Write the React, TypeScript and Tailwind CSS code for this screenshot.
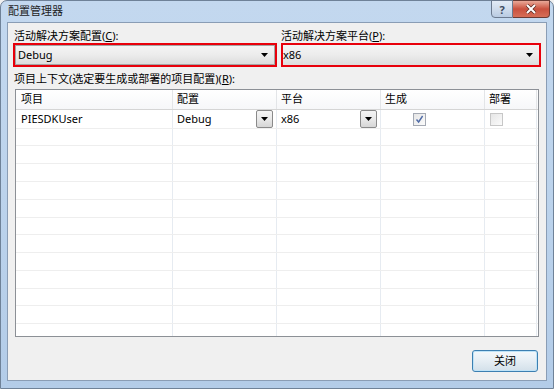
import React from "react";

function Arrow() {
  return (
    <svg width="7" height="4" viewBox="0 0 7 4" className="block">
      <path d="M0 0 H7 L3.5 4 Z" fill="#000" />
    </svg>
  );
}

function CellButton() {
  return (
    <div className="w-[17px] h-[18px] border border-[#8a8a8a] rounded-[2px] bg-gradient-to-b from-[#f5f5f5] via-[#e9e9e9] to-[#d6d6d6] flex items-center justify-center">
      <Arrow />
    </div>
  );
}

function CheckBox({ checked }: { checked: boolean }) {
  return (
    <div
      className={
        "w-[13px] h-[13px] border flex items-center justify-center bg-gradient-to-br from-[#e6e6e6] to-[#fbfbfb] " +
        (checked ? "border-[#a4a9b3]" : "border-[#c7c7c7]")
      }
    >
      {checked && (
        <svg width="9" height="9" viewBox="0 0 9 9" className="block">
          <path d="M1.5 4.5 L3.6 7 L7.6 1" stroke="#4f6ba6" strokeWidth="1.4" fill="none" />
        </svg>
      )}
    </div>
  );
}

const rowHeights = [17, 18, 18, 18, 18, 17, 18, 18, 18, 17, 18, 18];

export default function App() {
  return (
    <div className="w-[554px] h-[389px] overflow-hidden bg-[#f0f0f0]">
      <div className="w-[554px] h-[389px] flex flex-col border border-[#6f8298] rounded-t-[7px] bg-gradient-to-b from-[#c3d8ef] via-[#bcd3ec] to-[#b3cce8] font-['Noto_Sans','Noto_Sans_CJK_SC',sans-serif] text-[11px] text-black">
        {/* title bar */}
        <div className="h-[21px] flex items-start shrink-0">
          <div className="pl-[7px] pt-[2px] leading-[16px] text-[11px] text-[#1e1e1e]">配置管理器</div>
          <div className="ml-auto mr-[3px] flex h-[18px] -mt-[1px]">
            <div className="w-[22px] h-full border border-[#6b7a8f] rounded-bl-[4px] bg-gradient-to-b from-[#e2ebf6] via-[#cfdcec] to-[#b9cbe2] flex items-center justify-center text-[11px] leading-none text-[#3d4b5e] font-bold">
              ?
            </div>
            <div className="w-[37px] h-full border border-l-0 border-[#6b3a33] rounded-br-[4px] bg-gradient-to-b from-[#e9a898] via-[#c9503e] to-[#d66e57] flex items-center justify-center">
              <svg width="12" height="10" viewBox="0 0 12 10" className="block">
                <path d="M2 1 L10 9 M10 1 L2 9" stroke="#5a2a22" strokeWidth="3.4" />
                <path d="M2 1 L10 9 M10 1 L2 9" stroke="#ffffff" strokeWidth="2" />
              </svg>
            </div>
          </div>
        </div>

        {/* client area */}
        <div className="ml-[6px] w-[540px] h-[359px] border border-[#8a9db5] bg-[#f0f0f0] flex flex-col px-[5px] pt-[6px]">
          <div className="flex gap-[4px]">
            <div className="w-[264px] flex flex-col">
              <div className="h-[14px] leading-[14px] pl-[1px]">
                活动解决方案配置(<span className="underline">C</span>):
              </div>
              <div className="h-[24px] border-2 border-[#e8000b]">
                <div className="h-full border border-[#a5a5a5] bg-gradient-to-b from-[#f4f4f4] via-[#ececec] to-[#dddddd] flex items-center pl-[2px] pr-[6px]">
                  <span className="leading-[14px]">Debug</span>
                  <span className="ml-auto">
                    <Arrow />
                  </span>
                </div>
              </div>
            </div>
            <div className="flex-1 flex flex-col">
              <div className="h-[14px] leading-[14px]">
                活动解决方案平台(<span className="underline">P</span>):
              </div>
              <div className="h-[24px] border-2 border-[#e8000b] bg-gradient-to-b from-[#f4f4f4] via-[#ececec] to-[#dddddd] flex items-center pr-[6px]">
                <span className="leading-[14px]">x86</span>
                <span className="ml-auto">
                  <Arrow />
                </span>
              </div>
            </div>
          </div>

          <div className="mt-[5px] h-[14px] leading-[14px] pl-[1px]">
            项目上下文(选定要生成或部署的项目配置)(<span className="underline">R</span>):
          </div>

          {/* grid */}
          <div className="mt-[3px] ml-[2px] w-[524px] h-[248px] border border-[#8c9096] bg-white overflow-hidden flex flex-col">
            <div className="h-[20px] shrink-0 flex border-b border-[#d5d5d5] bg-gradient-to-b from-[#ffffff] to-[#f6f7f9]">
              <div className="w-[157px] border-r border-[#e3e5e8] pl-[5px] flex items-center">项目</div>
              <div className="w-[104px] border-r border-[#e3e5e8] pl-[4px] flex items-center">配置</div>
              <div className="w-[104px] border-r border-[#e3e5e8] pl-[4px] flex items-center">平台</div>
              <div className="w-[104px] border-r border-[#e3e5e8] pl-[4px] flex items-center">生成</div>
              <div className="w-[52px] border-r border-[#e3e5e8] pl-[4px] flex items-center">部署</div>
            </div>
            <div className="h-[19px] shrink-0 flex border-b border-[#eeeeee]">
              <div className="w-[157px] border-r border-[#e6ebf1] pl-[5px] flex items-center">PIESDKUser</div>
              <div className="w-[104px] border-r border-[#e6ebf1] pl-[4px] pr-[3px] flex items-center">
                <span>Debug</span>
                <span className="ml-auto">
                  <CellButton />
                </span>
              </div>
              <div className="w-[104px] border-r border-[#e6ebf1] pl-[4px] pr-[3px] flex items-center">
                <span>x86</span>
                <span className="ml-auto">
                  <CellButton />
                </span>
              </div>
              <div className="w-[104px] border-r border-[#e6ebf1] pl-[32px] flex items-center">
                <CheckBox checked={true} />
              </div>
              <div className="w-[52px] border-r border-[#e6ebf1] pl-[5px] flex items-center">
                <CheckBox checked={false} />
              </div>
            </div>
            {rowHeights.map((h, i) => (
              <div key={i} className="shrink-0 flex border-b border-[#eeeeee]" style={{ height: h }}>
                <div className="w-[157px] border-r border-[#e6ebf1]" />
                <div className="w-[104px] border-r border-[#e6ebf1]" />
                <div className="w-[104px] border-r border-[#e6ebf1]" />
                <div className="w-[104px] border-r border-[#e6ebf1]" />
                <div className="w-[52px] border-r border-[#e6ebf1]" />
              </div>
            ))}
          </div>

          <div className="mt-[13px] flex justify-end pr-[3px]">
            <div className="w-[66px] h-[22px] rounded-[3px] border border-[#3c7fb1] bg-gradient-to-b from-[#f4f8fb] via-[#e6eef4] to-[#d3e0ea] shadow-[inset_0_0_0_1px_#bfe3f7] flex items-center justify-center">
              关闭
            </div>
          </div>
        </div>
      </div>
    </div>
  );
}
